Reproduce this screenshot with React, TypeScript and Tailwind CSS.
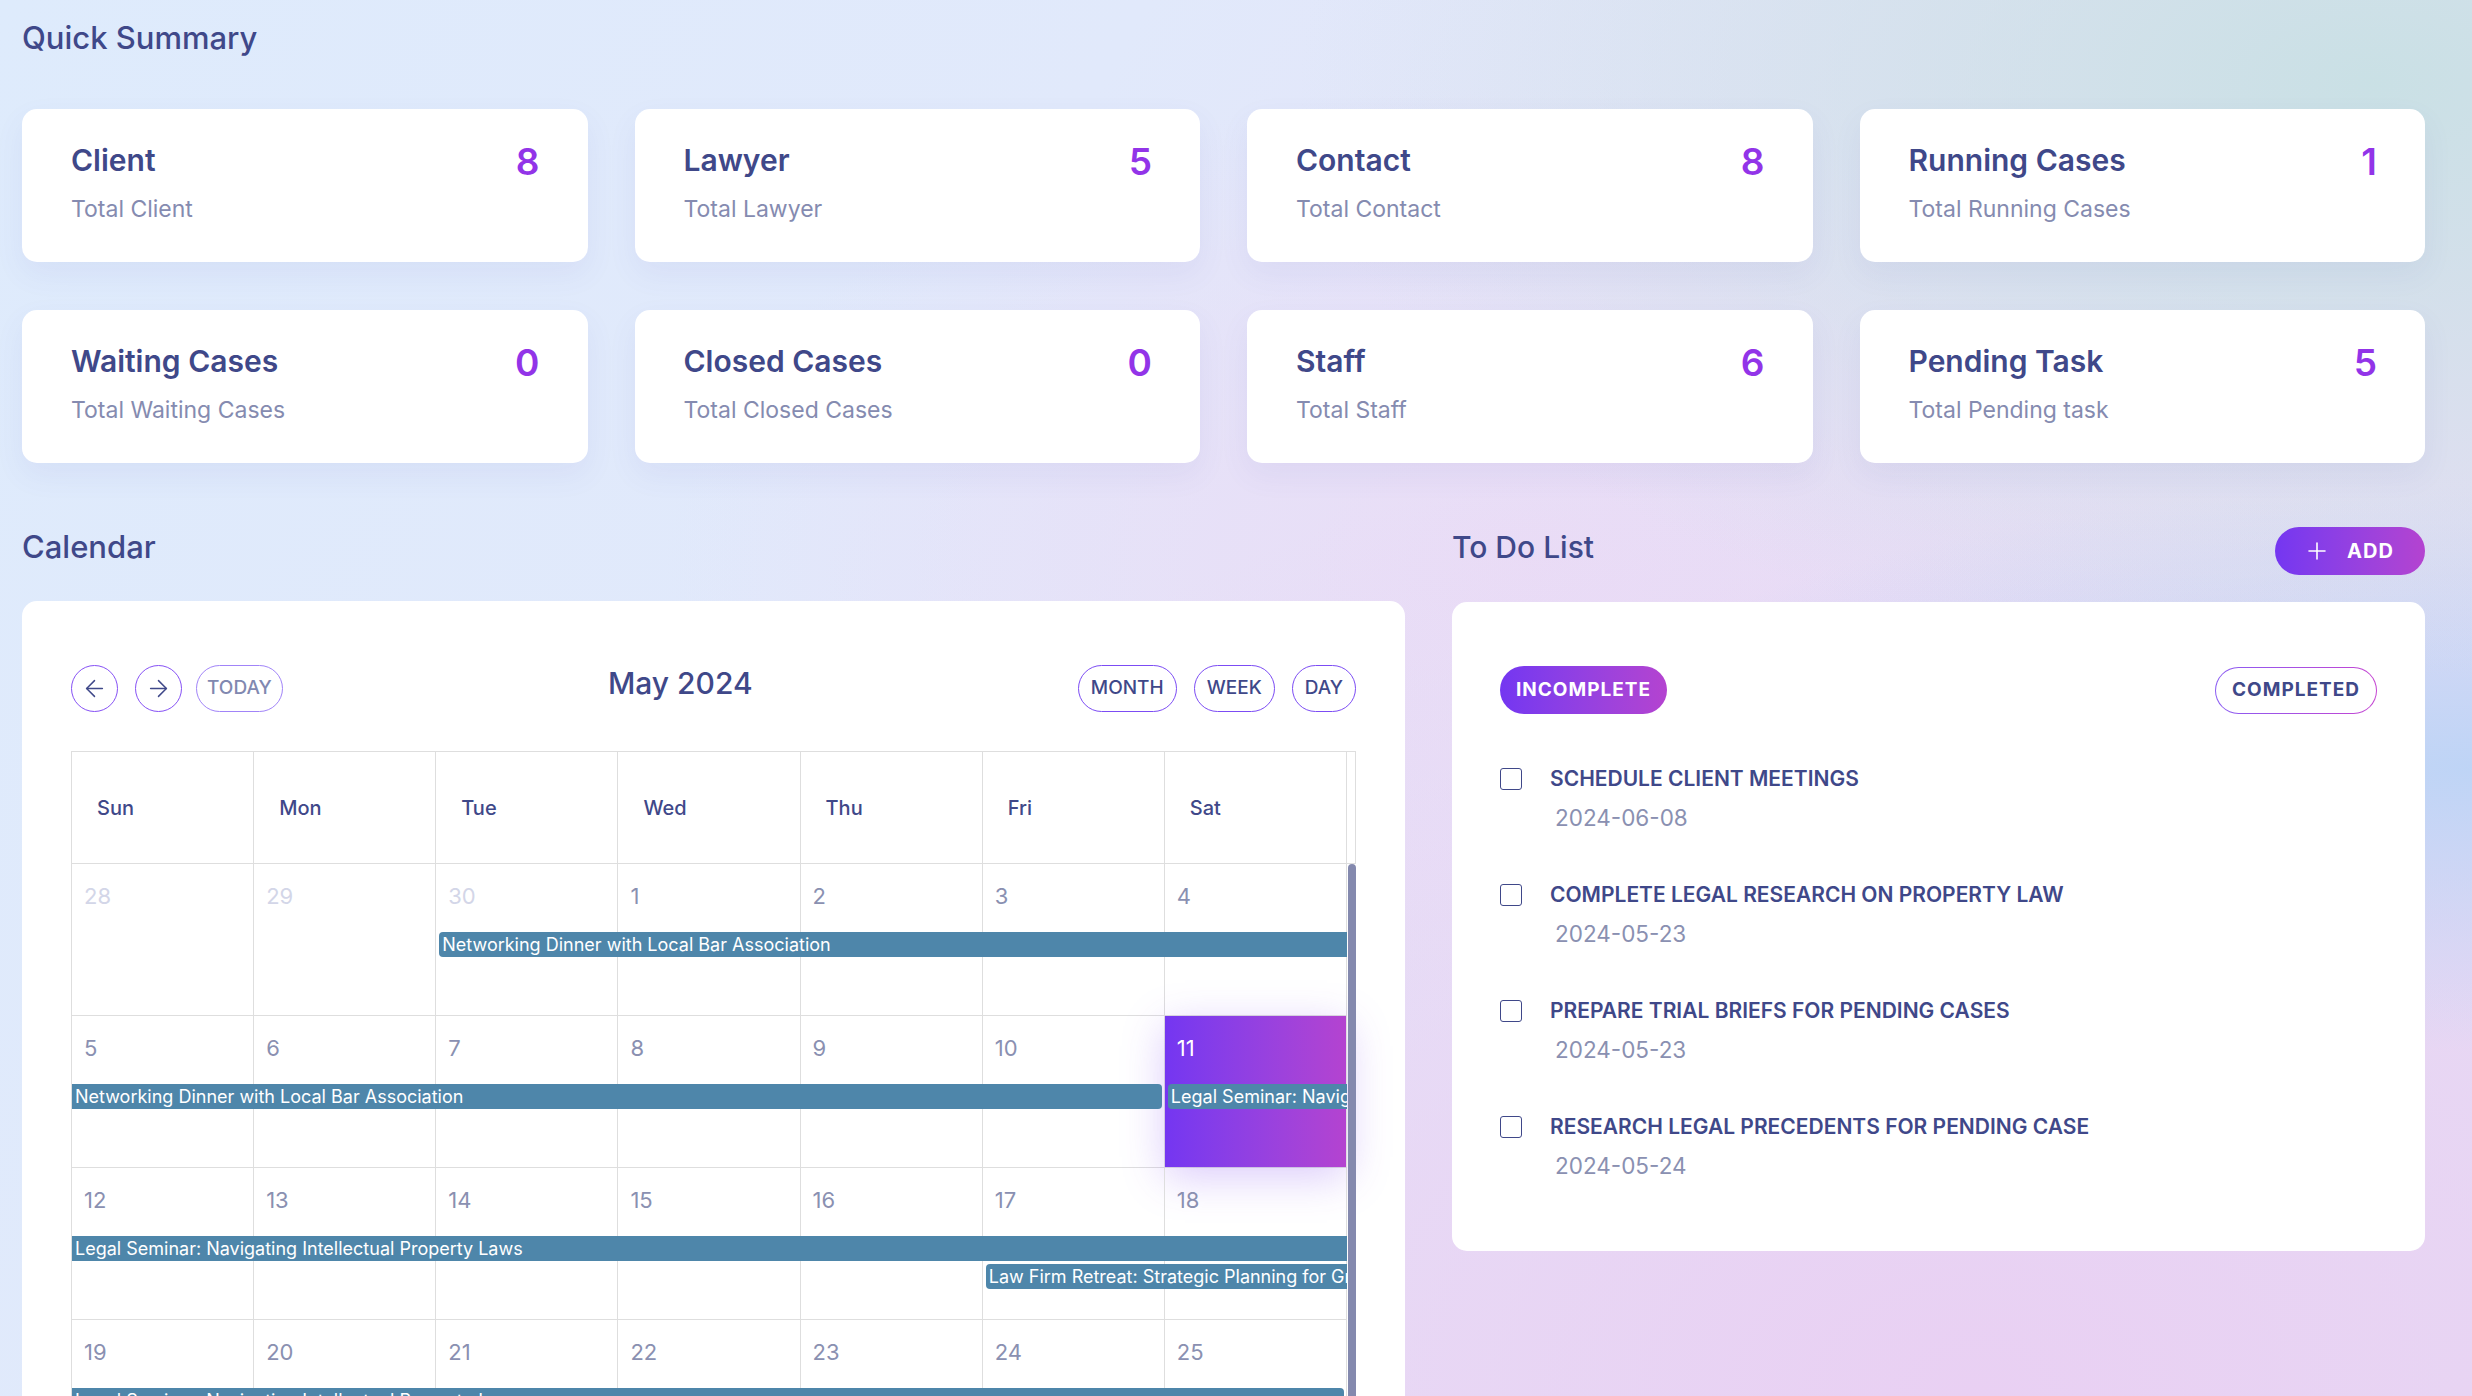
import { ArrowLeft, ArrowRight } from 'lucide-react'

// Tarjetas de resumen
const stats = [
  { title: 'Client', sub: 'Total Client', value: 8 },
  { title: 'Lawyer', sub: 'Total Lawyer', value: 5 },
  { title: 'Contact', sub: 'Total Contact', value: 8 },
  { title: 'Running Cases', sub: 'Total Running Cases', value: 1 },
  { title: 'Waiting Cases', sub: 'Total Waiting Cases', value: 0 },
  { title: 'Closed Cases', sub: 'Total Closed Cases', value: 0 },
  { title: 'Staff', sub: 'Total Staff', value: 6 },
  { title: 'Pending Task', sub: 'Total Pending task', value: 5 },
]

const todos = [
  { title: 'Schedule Client Meetings', date: '2024-06-08' },
  { title: 'Complete Legal Research on Property Law', date: '2024-05-23' },
  { title: 'Prepare Trial Briefs for Pending Cases', date: '2024-05-23' },
  { title: 'Research Legal Precedents for Pending Case', date: '2024-05-24' },
]

const dayNames = ['Sun', 'Mon', 'Tue', 'Wed', 'Thu', 'Fri', 'Sat']

interface CalEvent {
  start: number
  span: number
  lane: number
  text: string
  roundL?: boolean
  roundR?: boolean
}

interface Week {
  days: { n: number; other?: boolean; today?: boolean }[]
  events: CalEvent[]
}

const NETWORKING = 'Networking Dinner with Local Bar Association'
const SEMINAR = 'Legal Seminar: Navigating Intellectual Property Laws'
const RETREAT = 'Law Firm Retreat: Strategic Planning for Growth'

const weeks: Week[] = [
  {
    days: [
      { n: 28, other: true }, { n: 29, other: true }, { n: 30, other: true },
      { n: 1 }, { n: 2 }, { n: 3 }, { n: 4 },
    ],
    events: [{ start: 3, span: 5, lane: 0, text: NETWORKING, roundL: true }],
  },
  {
    days: [{ n: 5 }, { n: 6 }, { n: 7 }, { n: 8 }, { n: 9 }, { n: 10 }, { n: 11, today: true }],
    events: [
      { start: 1, span: 6, lane: 0, text: NETWORKING, roundR: true },
      { start: 7, span: 1, lane: 0, text: SEMINAR, roundL: true },
    ],
  },
  {
    days: [{ n: 12 }, { n: 13 }, { n: 14 }, { n: 15 }, { n: 16 }, { n: 17 }, { n: 18 }],
    events: [
      { start: 1, span: 7, lane: 0, text: SEMINAR },
      { start: 6, span: 2, lane: 1, text: RETREAT, roundL: true },
    ],
  },
  {
    days: [{ n: 19 }, { n: 20 }, { n: 21 }, { n: 22 }, { n: 23 }, { n: 24 }, { n: 25 }],
    events: [
      { start: 1, span: 7, lane: 0, text: SEMINAR, roundR: true },
      { start: 1, span: 2, lane: 1, text: RETREAT, roundR: true },
    ],
  },
  {
    days: [
      { n: 26 }, { n: 27 }, { n: 28 }, { n: 29 }, { n: 30 }, { n: 31 },
      { n: 1, other: true },
    ],
    events: [],
  },
]

const colStart = ['', 'col-start-1', 'col-start-2', 'col-start-3', 'col-start-4', 'col-start-5', 'col-start-6', 'col-start-7']
const colSpan = ['', 'col-span-1', 'col-span-2', 'col-span-3', 'col-span-4', 'col-span-5', 'col-span-6', 'col-span-7']
const laneRow = ['row-start-2', 'row-start-4']

function StatCard({ title, sub, value }: { title: string; sub: string; value: number }) {
  return (
    <div className="h-[153px] rounded-[15px] bg-white pl-[49px] pr-[48px] pt-[33px] flex justify-between items-start shadow-[0_12px_30px_rgba(90,90,190,0.07)]">
      <div>
        <div className="text-[30px] leading-[36px] font-semibold text-[#3f4889]">{title}</div>
        <div className="mt-[16px] text-[23px] leading-[30px] text-[#858bb0]">{sub}</div>
      </div>
      <div className="text-[37px] leading-[40px] font-semibold text-[#9234e8]">{value}</div>
    </div>
  )
}

function CalendarCard() {
  return (
    <div className="rounded-[15px] bg-white px-[49px] pt-[64px] pb-[40px]">
      {/* Barra de herramientas */}
      <div className="flex items-start justify-between h-[48px]">
        <div className="flex">
          <button className="w-[47px] h-[47px] rounded-full border border-[#8651f5] flex items-center justify-center text-[#3f4889]">
            <ArrowLeft size={27} strokeWidth={1.3} />
          </button>
          <button className="ml-[17px] w-[47px] h-[47px] rounded-full border border-[#8651f5] flex items-center justify-center text-[#3f4889]">
            <ArrowRight size={27} strokeWidth={1.3} />
          </button>
          <button className="ml-[14px] h-[47px] px-[10px] rounded-full border border-[#a184f8] text-[19px] font-medium text-[#8188b0]">
            TODAY
          </button>
        </div>
        <div className="text-[30px] leading-[36px] font-medium text-[#3f4889]">May 2024</div>
        <div className="flex gap-[17px]">
          {['MONTH', 'WEEK', 'DAY'].map(v => (
            <button
              key={v}
              className="h-[47px] px-[12px] rounded-full border border-[#7c4cf4] text-[19px] font-medium text-[#3f4889]"
            >
              {v}
            </button>
          ))}
        </div>
      </div>

      {/* Encabezado */}
      <div className="mt-[38px] flex border-t border-l border-[#dedede]">
        <div className="grid grid-cols-7 w-[1276px]">
          {dayNames.map(d => (
            <div
              key={d}
              className="h-[112px] border-r border-b border-[#dedede] flex items-center pl-[25px] text-[20px] font-medium text-[#3f4889]"
            >
              {d}
            </div>
          ))}
        </div>
        <div className="w-[9px] border-r border-b border-[#dedede]" />
      </div>

      {/* Semanas */}
      <div className="flex">
        <div className="w-[1276px] border-l border-[#dedede]">
          {weeks.map((w, wi) => (
            <div
              key={wi}
              className="grid grid-cols-7 grid-rows-[68px_25px_3px_25px_1fr] h-[152px] border-b border-[#dedede]"
            >
              {w.days.map((d, di) => (
                <div
                  key={di}
                  className={`${colStart[di + 1]} row-span-full border-r border-[#dedede] pl-[12px] pt-[17px] text-[22px] leading-[30px] ${
                    d.today
                      ? 'bg-gradient-to-r from-[#7436f1] to-[#b443d0] text-white shadow-[0_10px_40px_rgba(124,70,240,0.28)]'
                      : d.other
                        ? 'text-[#d3d6e8]'
                        : 'text-[#8a90b1]'
                  }`}
                >
                  {d.n}
                </div>
              ))}
              {w.events.map((e, ei) => (
                <div
                  key={ei}
                  className={`${colStart[e.start]} ${colSpan[e.span]} ${laneRow[e.lane]} h-[25px] bg-[#4e86aa] text-white text-[18px] leading-[25px] px-[3px] overflow-hidden whitespace-nowrap ${
                    e.roundL ? 'ml-[3px] rounded-l-[4px]' : ''
                  } ${e.roundR ? 'mr-[3px] rounded-r-[4px]' : ''}`}
                >
                  {e.text}
                </div>
              ))}
            </div>
          ))}
        </div>
        <div className="w-[9px] pl-[1px]">
          <div className="w-[8px] h-[640px] rounded-t-full bg-[#8489ae]" />
        </div>
      </div>
    </div>
  )
}

function TodoCard() {
  return (
    <div className="rounded-[15px] bg-white pl-[48px] pr-[48px] pt-[64px] pb-[70px]">
      <div className="flex justify-between items-center">
        <button className="h-[48px] px-[16px] rounded-full bg-gradient-to-r from-[#7436f1] to-[#b443d0] text-white text-[19px] font-bold tracking-[1px]">
          INCOMPLETE
        </button>
        <button className="h-[47px] px-[16px] rounded-full border-[1.5px] border-transparent [background:linear-gradient(#fff,#fff)_padding-box,linear-gradient(90deg,#8a5cf3,#c545d2)_border-box] text-[#3f4889] text-[19px] font-bold tracking-[1px]">
          COMPLETED
        </button>
      </div>
      <div className="mt-[51px] flex flex-col gap-[48px]">
        {todos.map(t => (
          <div key={t.title}>
            <div className="flex items-center gap-[28px] h-[28px]">
              <div className="w-[22px] h-[22px] rounded-[3px] border-[1.5px] border-[#3f4889]" />
              <div className="text-[21px] leading-[28px] font-semibold uppercase text-[#3f4889]">{t.title}</div>
            </div>
            <div className="mt-[10px] ml-[55px] text-[22.5px] leading-[30px] text-[#8a90b1]">{t.date}</div>
          </div>
        ))}
      </div>
    </div>
  )
}

export default function App() {
  return (
    <div className="h-screen overflow-hidden font-['Inter',sans-serif] pl-[22px] pr-[47px] pt-[20px] bg-[radial-gradient(ellipse_at_96%_6%,rgba(200,224,228,0.95),transparent_32%),radial-gradient(ellipse_at_100%_55%,rgba(188,212,246,0.95),transparent_26%),radial-gradient(ellipse_at_80%_100%,rgba(233,208,243,1),transparent_50%),radial-gradient(ellipse_at_62%_40%,rgba(234,220,246,0.9),transparent_40%),linear-gradient(120deg,#deebfc_0%,#e1e9fb_35%,#e6e2f7_65%,#e6dcf3_100%)]">
      <h1 className="text-[31px] leading-[36px] font-medium text-[#3f4889]">Quick Summary</h1>

      <div className="mt-[53px] grid grid-cols-4 gap-x-[47px] gap-y-[48px]">
        {stats.map(s => (
          <StatCard key={s.title} {...s} />
        ))}
      </div>

      <div className="mt-[64px] grid grid-cols-[1383px_973px] gap-x-[47px]">
        <div>
          <div className="h-[48px] pt-[2px]">
            <h2 className="text-[31px] leading-[36px] font-medium text-[#3f4889]">Calendar</h2>
          </div>
          <div className="mt-[26px]">
            <CalendarCard />
          </div>
        </div>
        <div>
          <div className="h-[48px] flex items-start justify-between">
            <h2 className="pt-[2px] text-[30px] leading-[36px] font-medium text-[#3f4889]">To Do List</h2>
            <button className="h-[48px] w-[150px] rounded-full bg-gradient-to-r from-[#7436f1] to-[#b443d0] text-white flex items-center pl-[33px] gap-[21px]">
              <svg width="18" height="18" viewBox="0 0 18 18" fill="none" stroke="currentColor" strokeWidth="1.6" strokeLinecap="round">
                <path d="M9 1v16M1 9h16" />
              </svg>
              <span className="text-[20px] font-bold tracking-[1px]">ADD</span>
            </button>
          </div>
          <div className="mt-[27px]">
            <TodoCard />
          </div>
        </div>
      </div>
    </div>
  )
}
